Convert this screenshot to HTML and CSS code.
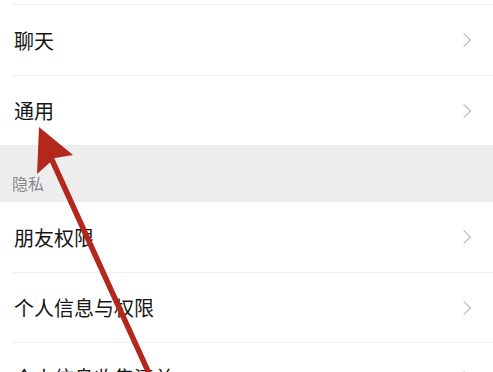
FILE: index.html
```html
<!DOCTYPE html>
<html lang="zh-CN">
<head>
    <meta charset="UTF-8">
    <meta name="viewport" content="width=device-width, initial-scale=1.0">
    <title>设置</title>
    <link rel="stylesheet" href="styles.css">
</head>
<body>
<div class="page">
    <div class="group">
        <div class="cut"></div>
        <div class="cell tall"><span class="label">聊天</span><span class="chevron"></span></div>
        <div class="cell"><span class="label">通用</span><span class="chevron"></span></div>
    </div>

    <div class="section-title">隐私</div>

    <div class="group">
        <div class="cell first"><span class="label">朋友权限</span><span class="chevron"></span></div>
        <div class="cell"><span class="label">个人信息与权限</span><span class="chevron"></span></div>
        <div class="cell"><span class="label">个人信息收集清单</span><span class="chevron"></span></div>
    </div>

    <!-- annotation arrow pointing at 通用 -->
    <svg class="arrow" width="493" height="372" viewBox="0 0 493 372">
        <line x1="52" y1="160" x2="152" y2="380" stroke="#b2281d" stroke-width="5.5"/>
        <polygon points="39,127 73,155 55,158 37,174" fill="#b2281d"/>
    </svg>
</div>
</body>
</html>
```

FILE: styles.css
```css
body {
    margin: 0;
    font-family: "Noto Sans CJK SC", "Noto Sans", sans-serif;
    background-color: #EDEDED;
    overflow: hidden;
}
.page {
    position: relative;
    width: 493px;
    height: 372px;
    overflow: hidden;
}
.group {
    background-color: #FFFFFF;
}
.cut {
    height: 4px;
}
.cell {
    display: flex;
    align-items: center;
    justify-content: space-between;
    height: 70px;
    box-sizing: border-box;
    margin-left: 13px;
    padding-left: 1px;
    padding-right: 24px;
    border-top: 1px solid #EFEFEF;
}
.cell.tall {
    height: 71px;
}
.cell.first {
    border-top: none;
}
.label {
    font-size: 20px;
    color: #161616;
}
.chevron {
    width: 9px;
    height: 9px;
    border-top: 1.5px solid #B4B4B4;
    border-right: 1.5px solid #B4B4B4;
    transform: rotate(45deg);
}
.section-title {
    height: 57px;
    box-sizing: border-box;
    padding: 26px 0 0 12px;
    font-size: 16px;
    color: #8A8A8A;
}
.arrow {
    position: absolute;
    top: 0;
    left: 0;
}
```
